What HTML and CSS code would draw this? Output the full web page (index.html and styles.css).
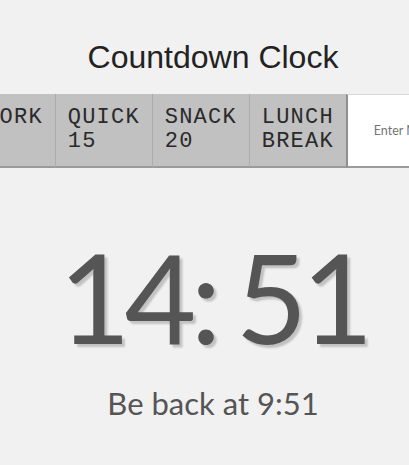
FILE: index.html
```html
<!DOCTYPE html>
<html lang="en">
<head>
<meta charset="utf-8">
<title>Countdown Clock</title>
<link rel="stylesheet" href="styles.css">
</head>
<body>
<main class="page">
  <h1 class="title">Countdown Clock</h1>
  <div class="controls">
    <button class="preset" type="button"><span class="label">WORK</span></button>
    <button class="preset" type="button"><span class="label">QUICK 15</span></button>
    <button class="preset" type="button"><span class="label">SNACK 20</span></button>
    <button class="preset" type="button"><span class="label">LUNCH BREAK</span></button>
    <input class="minutes" type="text" placeholder="Enter Minutes">
  </div>
  <div class="display">
    <div class="time"><span class="mins">14:</span><span class="secs">51</span></div>
    <div class="back">Be back at 9:51</div>
  </div>
</main>
</body>
</html>
```

FILE: styles.css
```css
html, body {
  margin: 0;
  padding: 0;
  background: #f1f1f1;
  overflow: hidden;
}

.page {
  padding-left: 17px;
  text-align: center;
}

.title {
  margin: 39px 0 0;
  font-family: "Liberation Sans", Arial, sans-serif;
  font-size: 32px;
  line-height: 36px;
  font-weight: normal;
  color: #222;
}

.controls {
  margin-top: 19px;
  display: flex;
  justify-content: center;
  align-items: stretch;
}

.preset {
  flex: 0 1 auto;
  display: flex;
  align-items: flex-start;
  margin: 0;
  padding: 12px 12px 12px 12px;
  background: #c1c1c1;
  border: 0;
  border-left: 1px solid #adadad;
  border-bottom: 2px solid #9a9a9a;
  font-family: Courier, "Courier New", "Liberation Mono", monospace;
  font-size: 22px;
  letter-spacing: 1.2px;
  line-height: 24px;
  color: #2a2a2a;
  text-align: left;
}

.label {
  display: block;
}

.minutes {
  flex: 0 0 108px;
  width: 108px;
  min-width: 0;
  box-sizing: border-box;
  margin: 0;
  padding: 0 0 0 26px;
  background: #fff;
  border: 0;
  border-left: 2px solid #8f8f8f;
  border-top: 1px solid #d8d8d8;
  border-bottom: 2px solid #9a9a9a;
  font-family: Lato, sans-serif;
  font-size: 12.5px;
  text-align: left;
  color: #333;
}

.minutes::placeholder {
  color: #757575;
}

.display {
  font-family: Lato, sans-serif;
  color: #555;
}

.time {
  margin-top: 66px;
  font-size: 124px;
  line-height: 124px;
  letter-spacing: -6px;
  text-shadow: 3px 3px 2px #c2c2c2;
}

.secs {
  margin-left: 20px;
}

.back {
  margin-top: 27px;
  font-size: 31px;
  line-height: 36px;
}
```
